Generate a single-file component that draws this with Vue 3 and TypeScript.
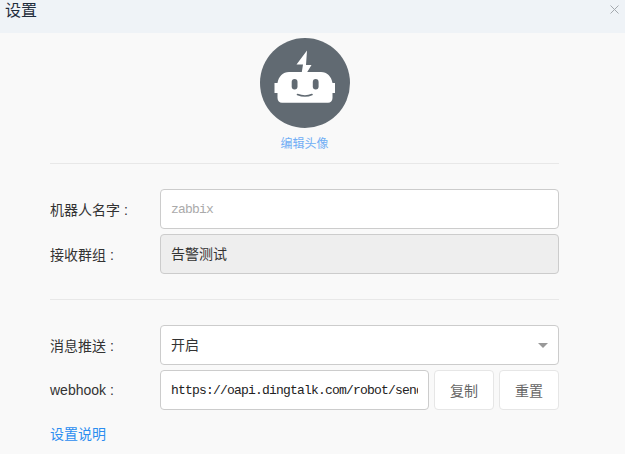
<script setup lang="ts">
const webhook = 'https://oapi.dingtalk.com/robot/send?access_token=8a6f3c'
</script>

<template>
  <div class="dialog">
    <header class="dialog__head">
      <span class="dialog__title">设置</span>
      <svg class="dialog__close" width="9" height="9" viewBox="0 0 9 9">
        <path d="M0.5 0.5L8.500 8.500M8.500 0.500L0.500 8.500" stroke="#a4a9ae" stroke-width="1" fill="none" />
      </svg>
    </header>
    <div class="dialog__body">
      <div class="avatar">
        <svg class="avatar__img" width="90" height="90" viewBox="0 0 90 90">
          <circle cx="45" cy="45" r="45" fill="#616a72" />
          <path d="M47 12.500L36.500 26.500H43L41.500 36H46L51.500 27H46Z" fill="#fff" />
          <path
            d="M29 34H61C67 34 71.500 38.500 72.500 45H75V55H72.500V60C72.500 62.800 70.500 64.800 68 64.800H22C19.500 64.800 17.500 62.800 17.500 60V55H14.500V45H17.500C18.500 38.500 23 34 29 34Z"
            fill="#fff"
          />
          <rect x="31.700" y="41" width="5.800" height="10.500" rx="2.900" fill="#616a72" />
          <rect x="52.800" y="41" width="5.800" height="10.500" rx="2.900" fill="#616a72" />
          <path d="M37.500 56.500C42 58.300 48 58.300 52 56.500" stroke="#616a72" stroke-width="1.600" fill="none" stroke-linecap="round" />
        </svg>
        <a class="avatar__edit">编辑头像</a>
      </div>

      <section class="group group--first">
        <div class="row row--name">
          <label class="row__label">机器人名字 :</label>
          <input class="field field--mono" placeholder="zabbix" />
        </div>
        <div class="row">
          <label class="row__label">接收群组 :</label>
          <div class="field field--disabled">告警测试</div>
        </div>
      </section>

      <section class="group group--second">
        <div class="row row--push">
          <label class="row__label">消息推送 :</label>
          <div class="field field--select">
            开启
            <span class="caret"></span>
          </div>
        </div>
        <div class="row">
          <label class="row__label">webhook :</label>
          <input class="field field--mono field--hook" :value="webhook" readonly />
          <button class="btn">复制</button>
          <button class="btn">重置</button>
        </div>
      </section>

      <a class="help">设置说明</a>
    </div>
  </div>
</template>

<style scoped>
.dialog {
  width: 625px;
  height: 454px;
  overflow: hidden;
  background: #f9f9f9;
  font-family: "Liberation Sans", "Noto Sans CJK SC", sans-serif;
  color: #333;
}

.dialog__head {
  display: flex;
  align-items: flex-start;
  justify-content: space-between;
  height: 33px;
  padding: 3px 6px 0 5px;
  box-sizing: border-box;
  background: #eff3f7;
}

.dialog__title {
  font-size: 16px;
  line-height: 16px;
  color: #1f2d3d;
}

.dialog__close {
  margin: 2px 0 0 0;
}

.dialog__body {
  padding: 5px 66px 0 50px;
}

.avatar {
  display: flex;
  flex-direction: column;
  align-items: center;
  padding-bottom: 11px;
  border-bottom: 1px solid #e8e8e8;
}

.avatar__img {
  display: block;
  margin-bottom: 9px;
}

.avatar__edit {
  font-size: 12px;
  line-height: 15px;
  color: #70aef5;
}

.group--first {
  padding: 25px 0;
  border-bottom: 1px solid #e8e8e8;
}

.group--second {
  padding-top: 25px;
}

.row {
  display: flex;
  align-items: center;
  height: 40px;
}

.row--name {
  margin-bottom: 5px;
}

.row--push {
  margin-bottom: 5px;
}

.row__label {
  flex: 0 0 110px;
  font-size: 14px;
}

.field {
  flex: 1;
  min-width: 0;
  height: 40px;
  box-sizing: border-box;
  padding: 0 10px;
  border: 1px solid #ccc;
  border-radius: 4px;
  background: #fff;
  font-size: 14px;
  line-height: 38px;
  color: #333;
  outline: none;
}

.field--mono {
  font-family: "Liberation Mono", monospace;
  font-size: 13px;
  letter-spacing: -0.8px;
  color: #222;
}

.field--mono::placeholder {
  color: #aaa;
}

.field--disabled {
  background: #eee;
}

.field--select {
  position: relative;
}

.caret {
  position: absolute;
  right: 10px;
  top: 17px;
  width: 0;
  height: 0;
  border-left: 5px solid transparent;
  border-right: 5px solid transparent;
  border-top: 5px solid #999;
}

.field--hook {
  flex: 0 0 269px;
}

.btn {
  width: 60px;
  height: 40px;
  margin-left: 5px;
  padding: 0;
  border: 1px solid #e6e6e6;
  border-radius: 4px;
  background: #fff;
  font-family: inherit;
  font-size: 14px;
  color: #666;
}

.help {
  display: block;
  margin-top: 15px;
  font-size: 14px;
  line-height: 18px;
  color: #2b8df0;
}
</style>

<style>
html,
body {
  margin: 0;
  background: #f9f9f9;
}
</style>
